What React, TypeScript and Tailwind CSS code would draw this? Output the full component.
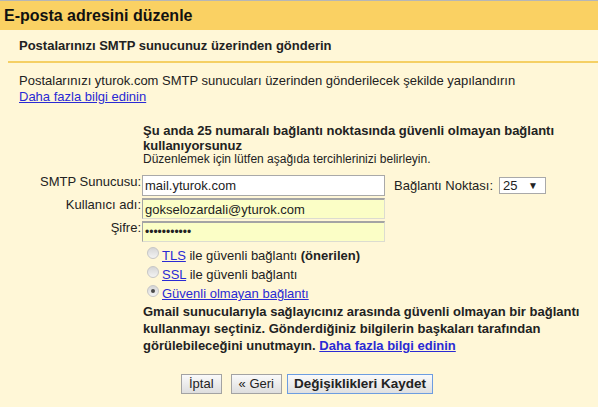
import { useState } from "react";

type Security = "tls" | "ssl" | "none";

function Radio({ checked }: { checked: boolean }) {
  return (
    <span className="mt-[1px] flex h-[12px] w-[12px] shrink-0 items-center justify-center rounded-full border border-[#c6c6c6] bg-linear-to-b from-[#d6d6d6] to-[#f3f3f3]">
      {checked && <span className="h-[4px] w-[4px] rounded-full bg-[#4a4a4a]" />}
    </span>
  );
}

export default function App() {
  const [security, setSecurity] = useState<Security>("none");
  const link = "text-[#2a2ad4] underline";

  return (
    <div className="h-[407px] w-[598px] overflow-hidden border-t border-[#b6b6b6] bg-[#fff7d7] font-['Liberation_Sans',Arial,sans-serif] text-[13px] text-[#222]">
      <h1 className="flex h-[29px] items-center bg-[#fad163] pl-[4px] text-[16px] font-bold text-[#111]">
        E-posta adresini düzenle
      </h1>
      <h2 className="flex h-[31px] items-center pl-[19px] font-bold">
        Postalarınızı SMTP sunucunuz üzerinden gönderin
      </h2>
      <div className="ml-[8px] h-[2px] bg-[#f5d064]" />

      <div className="pl-[19px] pt-[10px] leading-[16px]">
        <p>
          Postalarınızı yturok.com SMTP sunucuları üzerinden gönderilecek şekilde
          yapılandırın
        </p>
        <a href="#" className={link}>
          Daha fazla bilgi edinin
        </a>
      </div>

      <div className="mt-[18px] w-[450px] pl-[143px] box-content">
        <p className="font-bold leading-[15px]">
          Şu anda 25 numaralı bağlantı noktasında güvenli olmayan bağlantı
          kullanıyorsunuz
        </p>
        <p className="text-[12px] leading-[13px]">
          Düzenlemek için lütfen aşağıda tercihlerinizi belirleyin.
        </p>
      </div>

      <form className="mt-[9px] flex flex-col gap-[2px]" onSubmit={(e) => e.preventDefault()}>
        <div className="flex h-[21px] items-start">
          <label className="w-[142px] pr-[1px] text-right leading-[14px]">SMTP Sunucusu:</label>
          <input
            readOnly
            value="mail.yturok.com"
            className="h-[21px] w-[243px] border border-[#a9a9a9] bg-white px-[2px] text-[13px] text-[#222] outline-none"
          />
          <span className="ml-[9px] self-center leading-[14px]">Bağlantı Noktası:</span>
          <span className="ml-[6px] mt-[2px] flex h-[17px] w-[47px] items-center justify-between border border-[#a9a9a9] bg-white pl-[3px] pr-[7px]">
            <span className="leading-[14px]">25</span>
            <span className="text-[10px] leading-none">▼</span>
          </span>
        </div>
        <div className="flex h-[21px] items-start">
          <label className="w-[142px] pr-[1px] text-right leading-[14px]">Kullanıcı adı:</label>
          <input
            readOnly
            value="gokselozardali@yturok.com"
            className="h-[21px] w-[243px] border border-t-2 border-[#dcdcd0] border-l-[#a4a4a4] border-t-[#a4a4a4] bg-[#fbfec6] px-[2px] text-[13px] text-[#222] outline-none"
          />
        </div>
        <div className="flex h-[21px] items-start">
          <label className="w-[142px] pr-[1px] text-right leading-[14px]">Şifre:</label>
          <input
            readOnly
            value="•••••••••••"
            className="h-[21px] w-[243px] border border-t-2 border-[#dcdcd0] border-l-[#a4a4a4] border-t-[#a4a4a4] bg-[#fbfec6] px-[2px] text-[12px] text-[#222] outline-none"
          />
        </div>
      </form>

      <div className="mt-[4px] pl-[147px] leading-[19px]">
        <div className="flex items-start gap-[3px]" onClick={() => setSecurity("tls")}>
          <Radio checked={security === "tls"} />
          <span>
            <a href="#" className={link}>TLS</a> ile güvenli bağlantı{" "}
            <b>(önerilen)</b>
          </span>
        </div>
        <div className="flex items-start gap-[3px]" onClick={() => setSecurity("ssl")}>
          <Radio checked={security === "ssl"} />
          <span>
            <a href="#" className={link}>SSL</a> ile güvenli bağlantı
          </span>
        </div>
        <div className="flex items-start gap-[3px]" onClick={() => setSecurity("none")}>
          <Radio checked={security === "none"} />
          <a href="#" className={link}>Güvenli olmayan bağlantı</a>
        </div>
      </div>

      <p className="w-[450px] pl-[143px] box-content font-bold leading-[17px]">
        Gmail sunucularıyla sağlayıcınız arasında güvenli olmayan bir bağlantı
        kullanmayı seçtiniz. Gönderdiğiniz bilgilerin başkaları tarafından
        görülebileceğini unutmayın.{" "}
        <a href="#" className={link}>
          Daha fazla bilgi edinin
        </a>
      </p>

      <div className="mt-[20px] flex pl-[181px]">
        <button className="mr-[9px] h-[20px] border border-[#a3a3a3] bg-linear-to-b from-[#fafafa] to-[#dedede] px-[7px] leading-[14px]">
          İptal
        </button>
        <button className="mr-[5px] h-[20px] border border-[#a3a3a3] bg-linear-to-b from-[#fafafa] to-[#dedede] px-[7px] leading-[14px]">
          « Geri
        </button>
        <button className="h-[20px] border border-[#6d9de0] bg-linear-to-b from-[#fafafa] to-[#e0e0e0] px-[6px] text-[13.5px] font-bold leading-[14px]">
          Değişiklikleri Kaydet
        </button>
      </div>
    </div>
  );
}
